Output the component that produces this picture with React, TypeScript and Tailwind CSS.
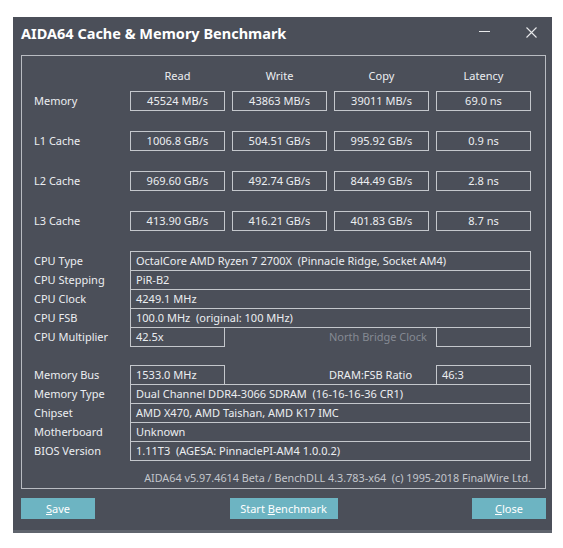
import React from "react";

const font = { fontFamily: '"Noto Sans", "Open Sans", Arial, sans-serif' };

const topRows = [
  { label: "Memory", vals: ["45524 MB/s", "43863 MB/s", "39011 MB/s", "69.0 ns"] },
  { label: "L1 Cache", vals: ["1006.8 GB/s", "504.51 GB/s", "995.92 GB/s", "0.9 ns"] },
  { label: "L2 Cache", vals: ["969.60 GB/s", "492.74 GB/s", "844.49 GB/s", "2.8 ns"] },
  { label: "L3 Cache", vals: ["413.90 GB/s", "416.21 GB/s", "401.83 GB/s", "8.7 ns"] },
];

function FullRow({ label, value }: { label: string; value: string }) {
  return (
    <div className="flex h-[20px] -mt-px first:mt-0">
      <div className="w-[96px] leading-[20px] text-[#eceef1]">{label}</div>
      <div className="w-[401px] border border-[#c4c7cc] pl-[5px] leading-[18px] text-[#eceef1] whitespace-pre">
        {value}
      </div>
    </div>
  );
}

function SplitRow({
  label,
  left,
  mid,
  right,
  midDim,
}: {
  label: string;
  left: string;
  mid: string;
  right: string;
  midDim?: boolean;
}) {
  return (
    <div className="flex h-[20px] -mt-px first:mt-0">
      <div className="w-[96px] leading-[20px] text-[#eceef1]">{label}</div>
      <div className="w-[95px] border border-[#c4c7cc] pl-[5px] leading-[18px] text-[#eceef1]">{left}</div>
      <div
        className={`w-[211px] pl-[104px] leading-[20px] ${midDim ? "text-[#858a93]" : "text-[#eceef1]"}`}
      >
        {mid}
      </div>
      <div className="w-[95px] border border-[#c4c7cc] pl-[5px] leading-[18px] text-[#eceef1]">{right}</div>
    </div>
  );
}

export default function App() {
  return (
    <div className="w-[563px] h-[548px] bg-white pl-[13px] pt-[17px]" style={font}>
      <div className="w-[539px] h-[516px] bg-[#4b4f59] flex flex-col border-b-[3px] border-[#5f646d]">
        {/* Title bar */}
        <div className="h-[38px] flex items-center relative">
          <div className="pl-[8px] text-[14.5px] font-bold text-white leading-none -mt-[5px]">
            AIDA64 Cache &amp; Memory Benchmark
          </div>
          <div className="absolute left-[466px] top-[14px] w-[11px] h-px bg-[#e8e9eb]" />
          <svg className="absolute left-[513px] top-[10px]" width="11" height="11" viewBox="0 0 11 11">
            <path d="M0.5 0.5 L10.5 10.5 M10.5 0.5 L0.5 10.5" stroke="#e8e9eb" strokeWidth="1.1" />
          </svg>
        </div>

        {/* Group box */}
        <div className="ml-[8px] w-[525px] h-[434px] border border-[#b9bcc2] pl-[12px] pt-[12px] text-[11px]">
          {/* Header */}
          <div className="grid grid-cols-[89px_95px_95px_95px_95px] gap-x-[7px] h-[16px] leading-[16px] text-[#eceef1]">
            <div />
            <div className="text-center">Read</div>
            <div className="text-center">Write</div>
            <div className="text-center">Copy</div>
            <div className="text-center">Latency</div>
          </div>
          <div className="mt-[7px] flex flex-col gap-y-[20px]">
            {topRows.map((r) => (
              <div key={r.label} className="grid grid-cols-[89px_95px_95px_95px_95px] gap-x-[7px] h-[20px]">
                <div className="leading-[20px] text-[#eceef1]">{r.label}</div>
                {r.vals.map((v, i) => (
                  <div
                    key={i}
                    className="border border-[#c4c7cc] text-center leading-[18px] text-[#eceef1]"
                  >
                    {v}
                  </div>
                ))}
              </div>
            ))}
          </div>

          {/* CPU info */}
          <div className="mt-[20px] flex flex-col">
            <FullRow label="CPU Type" value="OctalCore AMD Ryzen 7 2700X  (Pinnacle Ridge, Socket AM4)" />
            <FullRow label="CPU Stepping" value="PiR-B2" />
            <FullRow label="CPU Clock" value="4249.1 MHz" />
            <FullRow label="CPU FSB" value="100.0 MHz  (original: 100 MHz)" />
            <SplitRow label="CPU Multiplier" left="42.5x" mid="North Bridge Clock" right="" midDim />
          </div>

          {/* Memory info */}
          <div className="mt-[18px] flex flex-col">
            <SplitRow label="Memory Bus" left="1533.0 MHz" mid="DRAM:FSB Ratio" right="46:3" />
            <FullRow label="Memory Type" value="Dual Channel DDR4-3066 SDRAM  (16-16-16-36 CR1)" />
            <FullRow label="Chipset" value="AMD X470, AMD Taishan, AMD K17 IMC" />
            <FullRow label="Motherboard" value="Unknown" />
            <FullRow label="BIOS Version" value="1.11T3  (AGESA: PinnaclePI-AM4 1.0.0.2)" />
          </div>

          <div className="mt-[9px] w-[497px] text-right text-[10.8px] leading-[16px] text-[#c3c6cc] whitespace-pre">
            AIDA64 v5.97.4614 Beta / BenchDLL 4.3.783-x64  (c) 1995-2018 FinalWire Ltd.
          </div>
        </div>

        {/* Buttons */}
        <div className="mt-[9px] ml-[8px] w-[525px] flex justify-between text-[11px] text-white">
          <div className="w-[74px] h-[21px] bg-[#6db4c2] flex items-center justify-center leading-none">
            <span>
              <span className="underline">S</span>ave
            </span>
          </div>
          <div className="w-[108px] h-[21px] bg-[#6db4c2] flex items-center justify-center leading-none">
            <span>
              Start <span className="underline">B</span>enchmark
            </span>
          </div>
          <div className="w-[74px] h-[21px] bg-[#6db4c2] flex items-center justify-center leading-none">
            <span>
              <span className="underline">C</span>lose
            </span>
          </div>
        </div>
      </div>
    </div>
  );
}
